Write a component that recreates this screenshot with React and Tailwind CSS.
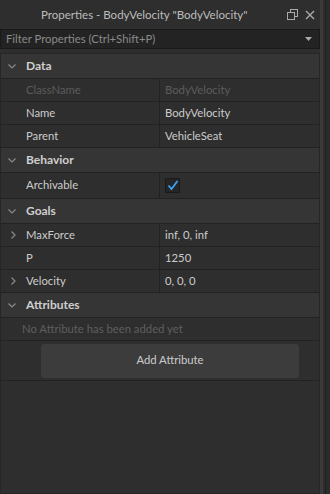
import React from 'react';

const Chevron = ({ open }) => (
  <svg width="10" height="10" viewBox="0 0 10 10" className="shrink-0">
    {open ? (
      <path d="M1.5 3.5 L5 7 L8.5 3.5" fill="none" stroke="#8a8a8a" strokeWidth="1.2" />
    ) : (
      <path d="M3.5 1.5 L7 5 L3.5 8.5" fill="none" stroke="#8a8a8a" strokeWidth="1.2" />
    )}
  </svg>
);

const Section = ({ title }) => (
  <div className="flex h-[25px] items-center border-b border-[#222] bg-[#353535] pl-[6px]">
    <Chevron open />
    <span className="ml-[9px] text-[12px] font-bold text-[#cfcfcf]">{title}</span>
  </div>
);

const Row = ({ name, value, expand, dim, children, tall }) => (
  <div className={`flex border-b border-[#222] ${tall ? 'h-[26px]' : 'h-[23px]'}`}>
    <div className="flex w-[159px] items-center border-r border-[#222] pl-[7px]">
      <div className="w-[10px]">{expand && <Chevron />}</div>
      <span className={`ml-[8px] ${dim ? 'text-[#5c5c5c]' : 'text-[#cccccc]'}`}>{name}</span>
    </div>
    <div className={`flex flex-1 items-center pl-[5px] ${dim ? 'text-[#5c5c5c]' : 'text-[#cccccc]'}`}>
      {children || value}
    </div>
  </div>
);

export default function App() {
  return (
    <div
      className="flex h-[494px] w-[330px] bg-[#2e2e2e] text-[11.3px]"
      style={{ fontFamily: 'Lato, "Noto Sans", sans-serif' }}
    >
      <div className="flex w-[320px] flex-col">
        <div className="flex h-[29px] items-center">
          <span className="flex-1 pl-[41px] text-[11.5px] text-[#bdbdbd]">
            Properties - BodyVelocity "BodyVelocity"
          </span>
          <svg width="11" height="11" viewBox="0 0 11 11" className="mr-[7px]">
            <rect x="3.5" y="0.5" width="7" height="7" fill="none" stroke="#aaa" />
            <rect x="0.5" y="3.5" width="7" height="7" fill="#2e2e2e" stroke="#aaa" />
          </svg>
          <svg width="10" height="10" viewBox="0 0 10 10" className="mr-[5px]">
            <path d="M1 1 L9 9 M9 1 L1 9" stroke="#aaa" strokeWidth="1.4" />
          </svg>
        </div>
        <div className="flex h-[20px] items-center border border-[#1a1a1a] bg-[#232323] pl-[5px] pr-[7px]">
          <span className="flex-1 text-[#8a8a8a]">Filter Properties (Ctrl+Shift+P)</span>
          <svg width="7" height="4" viewBox="0 0 7 4">
            <path d="M0 0 L7 0 L3.5 4 Z" fill="#aaa" />
          </svg>
        </div>
        <div className="mt-[4px] flex flex-1 flex-col border border-[#262626]">
          <Section title="Data" />
          <Row name="ClassName" value="BodyVelocity" dim />
          <Row name="Name" value="BodyVelocity" />
          <Row name="Parent" value="VehicleSeat" />
          <Section title="Behavior" />
          <Row name="Archivable" tall>
            <div className="flex h-[15px] w-[15px] items-center justify-center border border-[#1b1b1b] bg-[#252525]">
              <svg width="12" height="11" viewBox="0 0 12 11">
                <path d="M1.5 5.5 L4.5 9 L10.5 1" fill="none" stroke="#3aa3f5" strokeWidth="1.8" />
              </svg>
            </div>
          </Row>
          <Section title="Goals" />
          <Row name="MaxForce" value="inf, 0, inf" expand />
          <Row name="P" value="1250" />
          <Row name="Velocity" value="0, 0, 0" expand />
          <Section title="Attributes" />
          <div className="flex h-[23px] items-center border-b border-[#222] pl-[21px] text-[#5e5e5e]">
            No Attribute has been added yet
          </div>
          <div className="flex h-[40px] items-center border-b border-[#222] pl-[40px]">
            <div className="flex h-[34px] w-[258px] items-center justify-center rounded-[3px] bg-[#3c3c3c] text-[#cccccc]">
              Add Attribute
            </div>
          </div>
        </div>
      </div>
      <div className="w-[3px] bg-[#3a3a3a]" />
      <div className="w-[2px]" />
      <div className="w-[1px] bg-[#1f1f1f]" />
      <div className="flex-1 bg-[#2b2b2b]" />
    </div>
  );
}
